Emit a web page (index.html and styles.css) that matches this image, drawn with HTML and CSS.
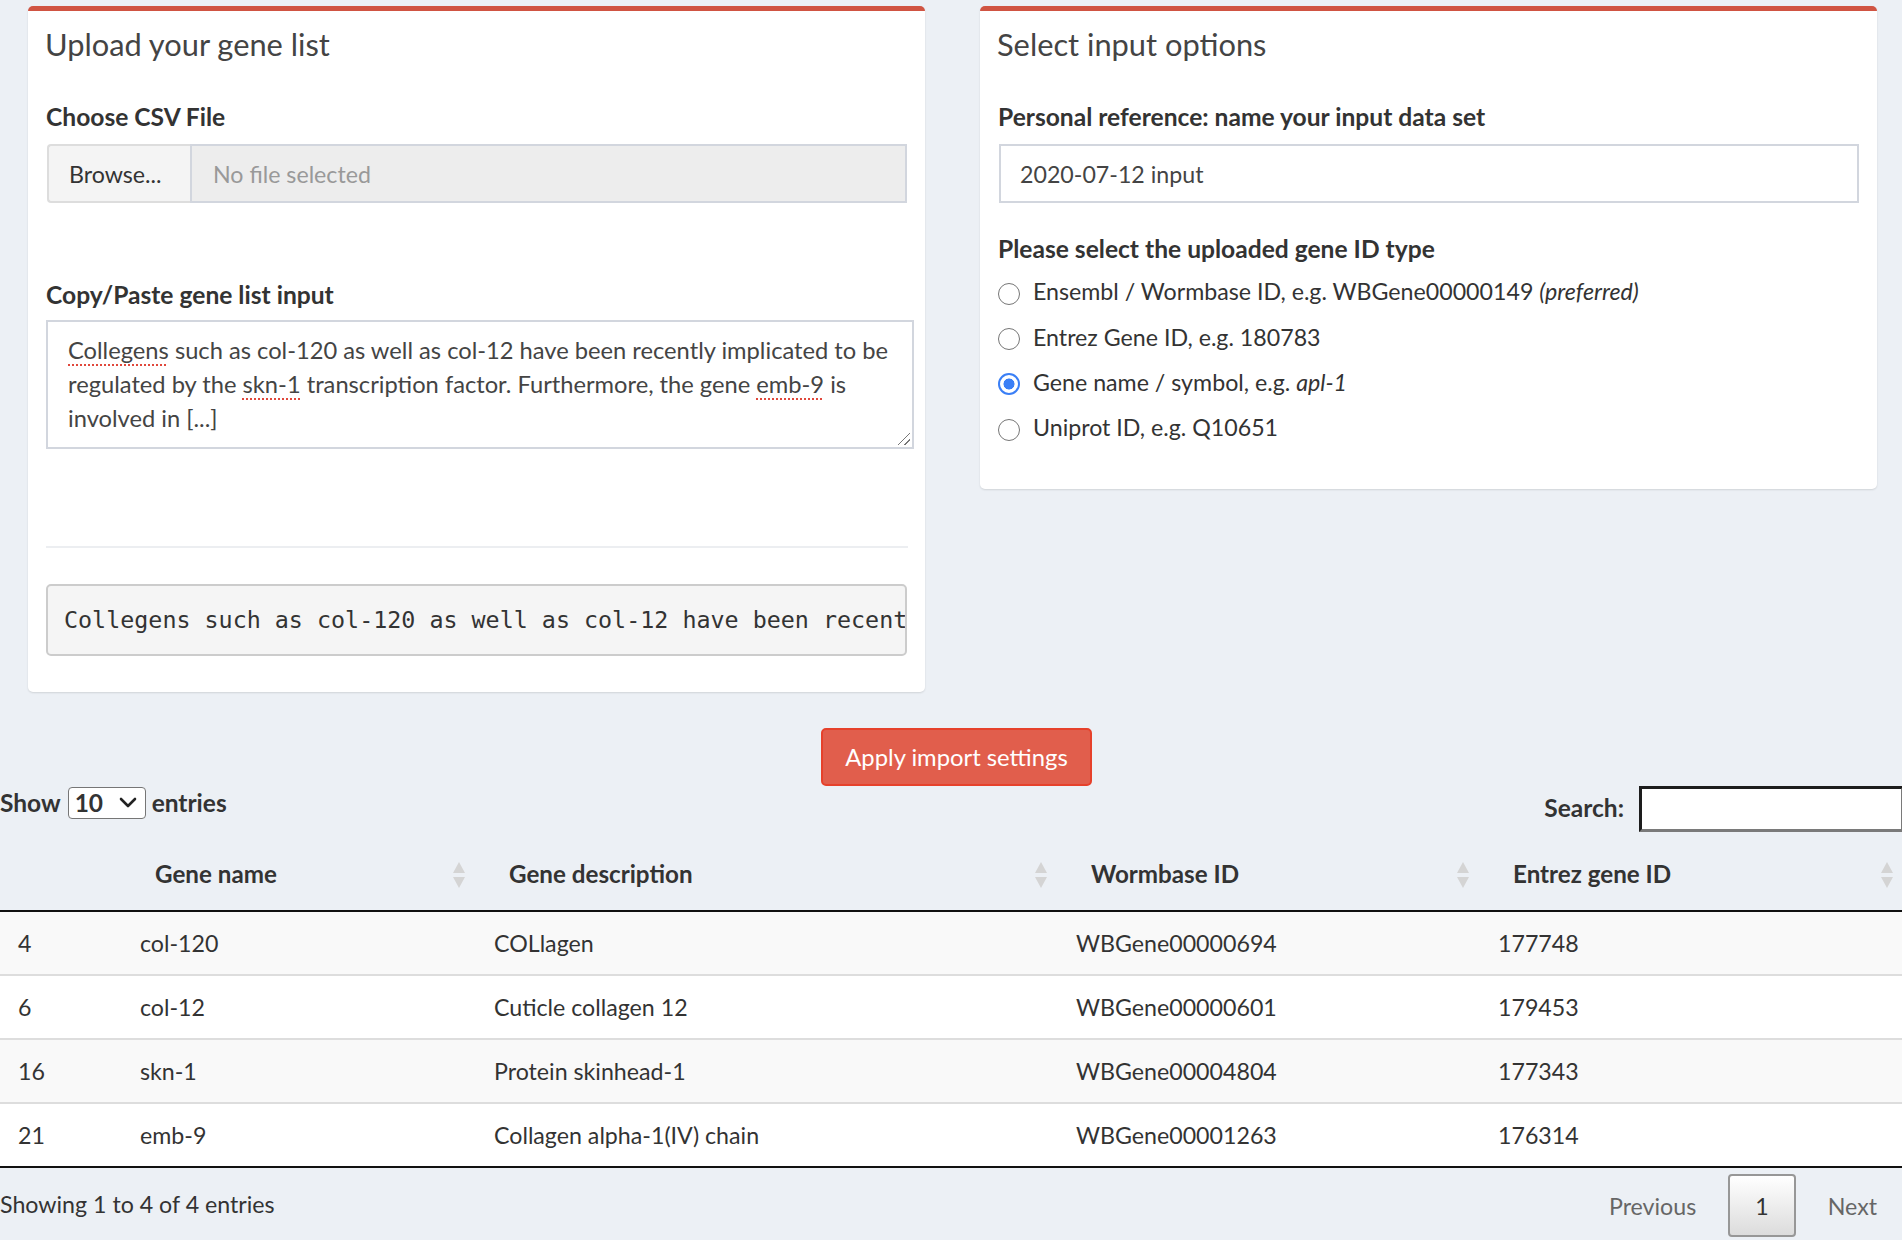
FILE: index.html
```html
<!DOCTYPE html>
<html lang="en">
<head>
<meta charset="utf-8">
<title>Gene list import</title>
<link rel="stylesheet" href="styles.css">
</head>
<body>
<div class="boxes">
  <section class="box box-upload">
    <h3 class="box-title">Upload your gene list</h3>
    <div class="field field-first">
      <label class="lbl">Choose CSV File</label>
      <div class="file-group">
        <span class="btn-browse">Browse...</span>
        <span class="file-name">No file selected</span>
      </div>
    </div>
    <div class="field field-paste">
      <label class="lbl">Copy/Paste gene list input</label>
      <div class="textarea"><span class="spell">Collegens</span> such as col-120 as well as col-12 have been recently implicated to be regulated by the <span class="spell">skn-1</span> transcription factor. Furthermore, the gene <span class="spell">emb-9</span> is involved in [...]</div>
    </div>
    <hr class="sep">
    <pre class="verbatim">Collegens such as col-120 as well as col-12 have been recent</pre>
  </section>

  <section class="box box-options">
    <h3 class="box-title">Select input options</h3>
    <div class="field field-first">
      <label class="lbl">Personal reference: name your input data set</label>
      <div class="text-input">2020-07-12 input</div>
    </div>
    <div class="field field-radio">
      <label class="lbl">Please select the uploaded gene ID type</label>
      <div class="radio-list">
        <div class="radio"><span class="radio-dot"></span><span>Ensembl / Wormbase ID, e.g. WBGene00000149 <i>(preferred)</i></span></div>
        <div class="radio"><span class="radio-dot"></span><span>Entrez Gene ID, e.g. 180783</span></div>
        <div class="radio"><span class="radio-dot checked"></span><span>Gene name / symbol, e.g. <i>apl-1</i></span></div>
        <div class="radio"><span class="radio-dot"></span><span>Uniprot ID, e.g. Q10651</span></div>
      </div>
    </div>
  </section>
</div>

<div class="apply-row">
  <button class="btn-apply" type="button">Apply import settings</button>
</div>

<div class="dt">
  <div class="dt-top">
    <div class="dt-length">
      <span>Show</span>
      <span class="select"><span>10</span><svg width="18" height="12" viewBox="0 0 18 12"><polyline points="2,2 9,9 16,2" fill="none" stroke="#222" stroke-width="2.6" stroke-linecap="round" stroke-linejoin="round"/></svg></span>
      <span>entries</span>
    </div>
    <div class="dt-filter">
      <span>Search:</span>
      <span class="search-input"></span>
    </div>
  </div>

  <table class="grid">
    <colgroup>
      <col class="c0"><col class="c1"><col class="c2"><col class="c3"><col class="c4">
    </colgroup>
    <thead>
      <tr>
        <th></th>
        <th>Gene name<svg class="sort" width="12" height="26" viewBox="0 0 12 26"><polygon points="6,0 12,11 0,11" /><polygon points="0,15 12,15 6,26" /></svg></th>
        <th>Gene description<svg class="sort" width="12" height="26" viewBox="0 0 12 26"><polygon points="6,0 12,11 0,11" /><polygon points="0,15 12,15 6,26" /></svg></th>
        <th>Wormbase ID<svg class="sort" width="12" height="26" viewBox="0 0 12 26"><polygon points="6,0 12,11 0,11" /><polygon points="0,15 12,15 6,26" /></svg></th>
        <th>Entrez gene ID<svg class="sort" width="12" height="26" viewBox="0 0 12 26"><polygon points="6,0 12,11 0,11" /><polygon points="0,15 12,15 6,26" /></svg></th>
      </tr>
    </thead>
    <tbody>
      <tr class="odd"><td>4</td><td>col-120</td><td>COLlagen</td><td>WBGene00000694</td><td>177748</td></tr>
      <tr class="even"><td>6</td><td>col-12</td><td>Cuticle collagen 12</td><td>WBGene00000601</td><td>179453</td></tr>
      <tr class="odd"><td>16</td><td>skn-1</td><td>Protein skinhead-1</td><td>WBGene00004804</td><td>177343</td></tr>
      <tr class="even"><td>21</td><td>emb-9</td><td>Collagen alpha-1(IV) chain</td><td>WBGene00001263</td><td>176314</td></tr>
    </tbody>
  </table>

  <div class="dt-bottom">
    <div class="dt-info">Showing 1 to 4 of 4 entries</div>
    <div class="dt-paginate">
      <span class="pg">Previous</span>
      <span class="pg current">1</span>
      <span class="pg">Next</span>
    </div>
  </div>
</div>
</body>
</html>
```
FILE: styles.css
```css
html, body {
  margin: 0;
  padding: 0;
  overflow: hidden;
}
body {
  width: 1902px;
  height: 1240px;
  background: #ecf0f5;
  font-family: Lato, "Open Sans", sans-serif;
  font-size: 23.2px;
  line-height: 34px;
  color: #333;
}

/* ---------- boxes ---------- */
.boxes {
  display: flex;
  align-items: flex-start;
  gap: 55px;
  padding: 6px 0 0 28px;
}
.box {
  box-sizing: border-box;
  width: 897px;
  background: #fff;
  border-top: 5px solid #d05442;
  border-radius: 5px;
  box-shadow: 0 1px 2px rgba(0, 0, 0, 0.12);
  padding: 0 18px;
}
.box-upload { padding-bottom: 36px; }
.box-options { padding-bottom: 45px; }

.box-title {
  margin: 14px 0 0 -1px;
  font-size: 30.8px;
  line-height: 40px;
  font-weight: 400;
  color: #444;
}
.lbl {
  display: block;
  font-weight: 700;
  font-size: 24.6px;
  line-height: 34px;
  color: #333;
}
.field-first { margin-top: 34.5px; }
.field-paste { margin-top: 75px; }
.field-radio { margin-top: 29px; }

/* file input */
.file-group {
  display: flex;
  height: 59px;
  margin-top: 10.5px;
  margin-left: 1px;
}
.btn-browse {
  box-sizing: border-box;
  width: 143px;
  display: flex;
  align-items: center;
  padding-left: 20px;
  background: #f4f4f4;
  border: 2px solid #ddd;
  border-right: none;
  border-radius: 4px 0 0 4px;
  color: #333;
}
.file-name {
  flex: 1;
  display: flex;
  align-items: center;
  padding-left: 21px;
  background: #ededed;
  border: 2px solid #d2d6de;
  color: #999;
}

/* textarea */
.textarea {
  position: relative;
  box-sizing: border-box;
  width: 868px;
  height: 129px;
  margin-top: 8.2px;
  padding: 11px 20px;
  border: 2px solid #d2d6de;
  color: #444;
  font-size: 23.7px;
}
.textarea::after {
  content: "";
  position: absolute;
  right: 2px;
  bottom: 2px;
  width: 12px;
  height: 12px;
  background: linear-gradient(135deg, transparent 46%, #777 46%, #777 54%, transparent 54%, transparent 72%, #777 72%, #777 80%, transparent 80%);
}
.spell {
  text-decoration: underline dotted #e0483c;
  text-decoration-thickness: 2px;
  text-underline-offset: 5px;
}

.sep {
  width: 862px;
  margin: 97px 0 0;
  border: 0;
  border-top: 2px solid #eceef1;
}
.verbatim {
  box-sizing: border-box;
  width: 861px;
  height: 72px;
  margin: 36px 0 0;
  padding: 17px 0 0 16px;
  background: #f5f5f5;
  border: 2px solid #ccc;
  border-radius: 5px;
  font-family: "DejaVu Sans Mono", monospace;
  font-size: 23.35px;
  line-height: 34px;
  color: #333;
  white-space: pre;
  overflow: hidden;
}

/* text input */
.text-input {
  box-sizing: border-box;
  height: 59px;
  margin-top: 10.5px;
  margin-left: 1px;
  display: flex;
  align-items: center;
  padding-left: 19px;
  border: 2px solid #d2d6de;
  color: #444;
}

/* radios */
.radio-list { margin-top: 8.25px; }
.radio {
  display: flex;
  align-items: flex-start;
  height: 34px;
  margin-bottom: 11.3px;
}
.radio:last-child { margin-bottom: 0; }
.radio-dot {
  box-sizing: border-box;
  flex: none;
  width: 22px;
  height: 22px;
  margin: 8.5px 13px 0 0;
  border: 1.5px solid #767676;
  border-radius: 50%;
  background: #fff;
}
.radio-dot.checked {
  border: 2.5px solid #3a7ff6;
  background: radial-gradient(circle, #3a7ff6 0 5.2px, #fff 5.8px);
}

/* apply button */
.apply-row {
  display: flex;
  justify-content: center;
  padding-left: 11px;
  margin-top: 36px;
}
.btn-apply {
  box-sizing: border-box;
  width: 271px;
  height: 58px;
  padding: 0;
  background: #e15e4c;
  border: 2px solid #e6412b;
  border-radius: 5px;
  color: #fff;
  font-family: Lato, "Open Sans", sans-serif;
  font-size: 23.8px;
}

/* data table */
.dt { width: 1904px; }
.dt-top {
  display: flex;
  justify-content: space-between;
  height: 46px;
}
.dt-length {
  display: flex;
  align-items: center;
  height: 34px;
  font-weight: 700;
  font-size: 24.5px;
}
.select {
  box-sizing: border-box;
  width: 78px;
  height: 32px;
  margin: 0 6px 0 7px;
  padding: 0 8px 0 6px;
  display: flex;
  align-items: center;
  justify-content: space-between;
  border: 1.5px solid #767676;
  border-radius: 4px;
  background: #fff;
  line-height: 28px;
}
.dt-filter {
  display: flex;
  align-items: center;
  height: 46px;
  font-weight: 700;
  font-size: 24.5px;
}
.dt-filter > span:first-child { position: relative; top: -1px; }
.search-input {
  box-sizing: border-box;
  width: 265px;
  height: 46px;
  margin-left: 15px;
  background: #fff;
  border: 3px solid;
  border-color: #1d1d1d #7a7a7a #7a7a7a #1d1d1d;
}

.grid {
  width: 1904px;
  margin-top: 8px;
  table-layout: fixed;
  border-collapse: separate;
  border-spacing: 0;
}
.c0 { width: 122px; }
.c1 { width: 354px; }
.c2 { width: 582px; }
.c3 { width: 422px; }
.c4 { width: 424px; }
.grid th {
  position: relative;
  padding: 17px 18px 19px 33px;
  text-align: left;
  font-weight: 700;
  font-size: 24.2px;
  line-height: 34px;
  color: #333;
  border-bottom: 2px solid #111;
}
.sort {
  position: absolute;
  right: 11px;
  top: 22px;
  fill: #d4d4d4;
}
.grid td {
  padding: 14px 18px;
  line-height: 34px;
  border-top: 2px solid #ddd;
  white-space: nowrap;
}
.grid tbody tr:first-child td { border-top: none; }
.grid tbody tr:last-child td { border-bottom: 2px solid #111; }
.grid tr.odd td { background: #f9f9f9; }
.grid tr.even td { background: #fff; }

.dt-bottom {
  display: flex;
  justify-content: space-between;
  align-items: flex-start;
}
.dt-info { padding-top: 19px; }
.dt-paginate {
  display: flex;
  gap: 5px;
  margin-top: 6px;
}
.pg {
  box-sizing: border-box;
  height: 63px;
  display: flex;
  align-items: center;
  padding: 0 25px;
  border: 2px solid transparent;
  border-radius: 4px;
  color: #666;
}
.pg.current {
  border-color: #979797;
  background: linear-gradient(#ffffff, #dcdcdc);
  color: #333;
}
```
